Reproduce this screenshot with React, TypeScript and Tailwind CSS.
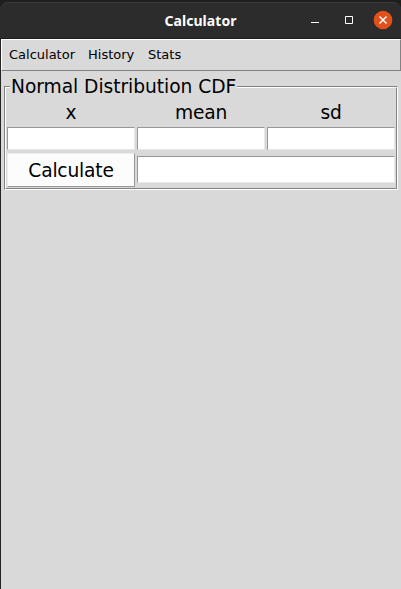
import React from "react";

const sunken =
  "block w-full min-w-0 rounded-none border border-t-[#979797] border-l-[#979797] border-r-[#e8e8e8] border-b-[#e8e8e8] bg-white outline-none";

function TitleBar() {
  return (
    <header className="h-[39px] bg-[#1e1e1e] pt-[2px]">
      <div className="grid h-[36px] grid-cols-[1fr_auto_1fr] items-center rounded-t-[8px] border-t border-[#3c3c3c] bg-[#2c2c2c]">
        <span />
        <h1 className="pt-px font-['Noto_Sans',sans-serif] text-[14px] leading-[34px] font-bold tracking-[0.05px] text-white">
          Calculator
        </h1>
        <div className="flex items-center justify-end pr-[8px]">
          <svg width="92" height="21" viewBox="0 0 92 21" fill="none">
            <path d="M10 12.5h8" stroke="#fff" />
            <path d="M44.5 6.5h7v7h-7z" stroke="#fff" />
            <circle cx="82" cy="10" r="9.3" fill="#e2501b" />
            <path d="M78.5 6.5l7 7M85.5 6.5l-7 7" stroke="#fff" strokeWidth="1.5" />
          </svg>
        </div>
      </div>
    </header>
  );
}

export default function App() {
  return (
    <div className="flex h-[589px] w-[401px] flex-col bg-[#d9d9d9] font-['DejaVu_Sans',sans-serif] text-black">
      <TitleBar />
      <main className="flex-1 border-l border-[#242424]">
        <nav className="flex h-[32px] gap-[12px] border border-t-white border-r-[#828282] border-b-[#828282] border-l-white pl-[7px] text-[13px] leading-[29px]">
          <span className="w-[67px]">Calculator</span>
          <span className="w-[48px]">History</span>
          <span>Stats</span>
        </nav>
        <section className="mt-[5px] mr-[3px] ml-[3px]">
          <div className="flex h-[24px] items-start text-[18.67px] leading-[22px] tracking-[-0.05px]">
            <div className="mt-[10px] h-[14px] w-[6px] border-t border-l border-[#828282]">
              <div className="h-full border-t border-l border-white" />
            </div>
            <h2 className="w-[227px] pl-px whitespace-nowrap">Normal Distribution CDF</h2>
            <div className="mt-[10px] h-[14px] flex-1 border-t border-r border-t-[#828282] border-r-white">
              <div className="h-full border-t border-r border-t-white border-r-[#828282]" />
            </div>
          </div>
          <div className="h-[90px] border-r border-b border-l border-r-white border-b-white border-l-[#828282]">
            <div className="h-full border-r border-b border-l border-r-[#828282] border-b-[#828282] border-l-white px-px">
              <div className="grid h-[27px] grid-cols-3 gap-x-[2px] text-center text-[18.67px] leading-[26px] tracking-[-0.2px]">
                <label htmlFor="x">x</label>
                <label htmlFor="mean">mean</label>
                <label htmlFor="sd">sd</label>
              </div>
              <div className="grid grid-cols-3 gap-x-[2px]">
                <input id="x" className={`${sunken} h-[23px]`} />
                <input id="mean" className={`${sunken} h-[23px]`} />
                <input id="sd" className={`${sunken} h-[23px]`} />
              </div>
              <div className="mt-[3px] grid grid-cols-3 items-start gap-x-[2px]">
                <button className="h-[34px] border border-t-[#ededed] border-r-[#979797] border-b-[#979797] border-l-[#ededed] bg-[#fcfcfc] pt-[2px] text-[18.67px] leading-[30px] tracking-[-0.2px]">
                  Calculate
                </button>
                <input aria-label="Result" readOnly className={`${sunken} col-span-2 mt-[3px] h-[27px]`} />
              </div>
            </div>
          </div>
        </section>
      </main>
    </div>
  );
}
